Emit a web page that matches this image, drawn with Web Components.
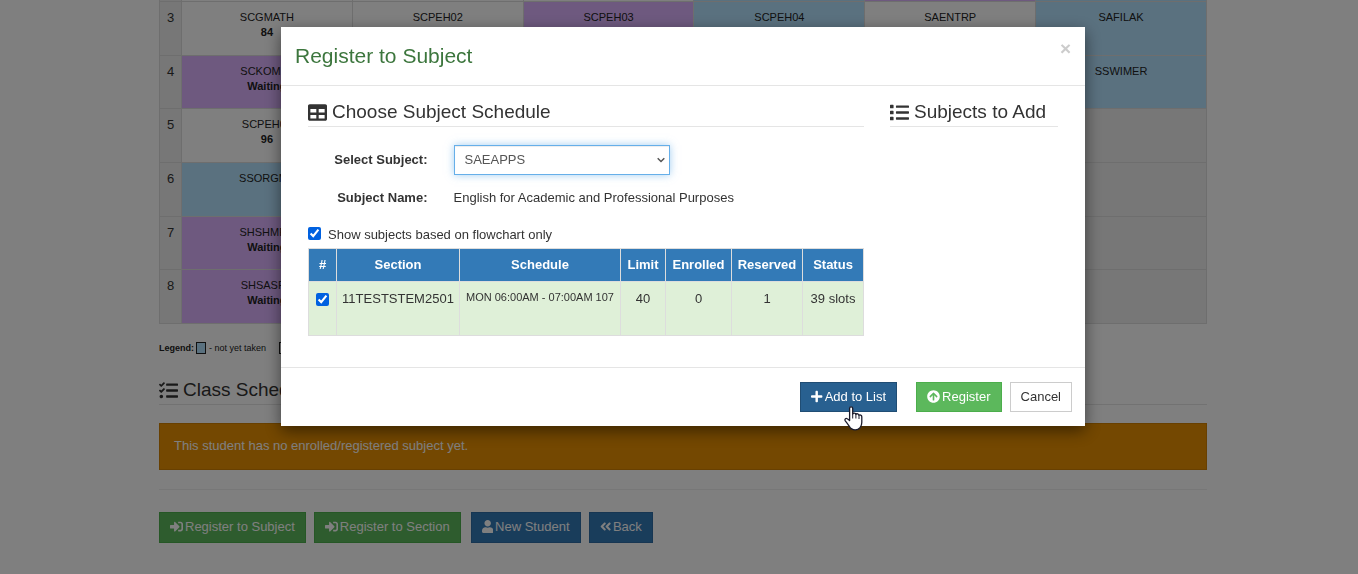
<!DOCTYPE html>
<html lang="en">
<head>
<meta charset="utf-8">
<title>Register to Subject</title>
<style>
  html { background: #fff; }
  body {
    margin: 0;
    padding-left: 8px;
    font: 13px/19px "Liberation Sans", Arial, sans-serif;
    color: #333;
  }
</style>
</head>
<body>
<registration-page></registration-page>
<modal-dialog heading="Register to Subject">
  <choose-schedule></choose-schedule>
  <section-heading slot="side" icon="list">Subjects to Add</section-heading>
  <app-button slot="actions" class="add" kind="primary-active" icon="plus">Add to List</app-button>
  <app-button slot="actions" kind="success" icon="arrow-up">Register</app-button>
  <app-button slot="actions" kind="default">Cancel</app-button>
</modal-dialog>

<script>
const ICONS = {
  table: [512, "M464 32H48C21.49 32 0 53.49 0 80v352c0 26.51 21.49 48 48 48h416c26.51 0 48-21.49 48-48V80c0-26.51-21.49-48-48-48zM224 416H64v-96h160v96zm0-160H64v-96h160v96zm224 160H288v-96h160v96zm0-160H288v-96h160v96z"],
  list: [512, "M80 368H16a16 16 0 0 0-16 16v64a16 16 0 0 0 16 16h64a16 16 0 0 0 16-16v-64a16 16 0 0 0-16-16zm0-320H16A16 16 0 0 0 0 64v64a16 16 0 0 0 16 16h64a16 16 0 0 0 16-16V64a16 16 0 0 0-16-16zm0 160H16a16 16 0 0 0-16 16v64a16 16 0 0 0 16 16h64a16 16 0 0 0 16-16v-64a16 16 0 0 0-16-16zm416 176H176a16 16 0 0 0-16 16v32a16 16 0 0 0 16 16h320a16 16 0 0 0 16-16v-32a16 16 0 0 0-16-16zm0-320H176a16 16 0 0 0-16 16v32a16 16 0 0 0 16 16h320a16 16 0 0 0 16-16V80a16 16 0 0 0-16-16zm0 160H176a16 16 0 0 0-16 16v32a16 16 0 0 0 16 16h320a16 16 0 0 0 16-16v-32a16 16 0 0 0-16-16z"],
  tasks: [512, "M139.61 35.5a12 12 0 0 0-17 0L58.93 98.81l-22.7-22.12a12 12 0 0 0-17 0L3.53 92.41a12 12 0 0 0 0 17l47.59 47.4a12.78 12.78 0 0 0 17.61 0l15.59-15.62L156.52 69a12.09 12.09 0 0 0 .09-17zm0 159.19a12 12 0 0 0-17 0l-63.68 63.72-22.7-22.1a12 12 0 0 0-17 0L3.53 252a12 12 0 0 0 0 17L51 316.5a12.77 12.77 0 0 0 17.6 0l15.7-15.69 72.2-72.22a12 12 0 0 0 .09-16.9zM64 368c-26.49 0-48.59 21.5-48.59 48S37.53 464 64 464a48 48 0 0 0 0-96zm432 16H208a16 16 0 0 0-16 16v32a16 16 0 0 0 16 16h288a16 16 0 0 0 16-16v-32a16 16 0 0 0-16-16zm0-320H208a16 16 0 0 0-16 16v32a16 16 0 0 0 16 16h288a16 16 0 0 0 16-16V80a16 16 0 0 0-16-16zm0 160H208a16 16 0 0 0-16 16v32a16 16 0 0 0 16 16h288a16 16 0 0 0 16-16v-32a16 16 0 0 0-16-16z"],
  "sign-in": [512, "M416 448h-84c-6.6 0-12-5.4-12-12v-40c0-6.6 5.4-12 12-12h84c17.7 0 32-14.3 32-32V160c0-17.7-14.3-32-32-32h-84c-6.6 0-12-5.4-12-12V76c0-6.6 5.4-12 12-12h84c53 0 96 43 96 96v192c0 53-43 96-96 96zm-47-201L201 79c-15-15-41-4.5-41 17v96H24c-13.3 0-24 10.7-24 24v96c0 13.3 10.7 24 24 24h136v96c0 21.5 26 32 41 17l168-168c9.3-9.4 9.3-24.6 0-34z"],
  user: [448, "M224 256c70.7 0 128-57.3 128-128S294.7 0 224 0 96 57.3 96 128s57.3 128 128 128zm89.6 32h-16.7c-22.2 10.2-46.9 16-72.9 16s-50.6-5.8-72.9-16h-16.7C60.2 288 0 348.2 0 422.4V464c0 26.5 21.5 48 48 48h352c26.5 0 48-21.5 48-48v-41.6c0-74.2-60.2-134.4-134.4-134.4z"],
  "angles-left": [448, "M223.7 239l136-136c9.4-9.4 24.6-9.4 33.9 0l22.6 22.6c9.4 9.4 9.4 24.6 0 33.9L319.9 256l96.4 96.4c9.4 9.4 9.4 24.6 0 33.9L393.7 409c-9.4 9.4-24.6 9.4-33.9 0l-136-136c-9.5-9.4-9.5-24.6-.1-34zm-192 34l136 136c9.4 9.4 24.6 9.4 33.9 0l22.6-22.6c9.4-9.4 9.4-24.6 0-33.9L127.9 256l96.4-96.4c9.4-9.4 9.4-24.6 0-33.9L201.7 103c-9.4-9.4-24.6-9.4-33.9 0l-136 136c-9.5 9.4-9.5 24.6-.1 34z"],
  plus: [448, "M416 208H272V64c0-17.67-14.33-32-32-32h-32c-17.67 0-32 14.33-32 32v144H32c-17.67 0-32 14.33-32 32v32c0 17.67 14.33 32 32 32h144v144c0 17.67 14.33 32 32 32h32c17.67 0 32-14.33 32-32V304h144c17.67 0 32-14.33 32-32v-32c0-17.67-14.33-32-32-32z"],
  "arrow-up": [512, "M8 256C8 119 119 8 256 8s248 111 248 248-111 248-248 248S8 393 8 256zm143.6 28.9l72.4-75.5V392c0 13.3 10.7 24 24 24h16c13.3 0 24-10.7 24-24V209.4l72.4 75.5c9.3 9.7 24.8 9.9 34.3.4l10.9-11c9.4-9.4 9.4-24.6 0-33.9L273 107.7c-9.4-9.4-24.6-9.4-33.9 0L106.3 240.4c-9.4 9.4-9.4 24.6 0 33.9l10.9 11c9.6 9.5 25.1 9.3 34.4-.4z"]
};

class Base extends HTMLElement {
  connectedCallback() {
    if (this.shadowRoot) return;
    this.attachShadow({ mode: "open" }).innerHTML = this.render();
  }
}

customElements.define("app-icon", class extends Base {
  render() {
    const [w, d] = ICONS[this.getAttribute("name")];
    return `<style>
      :host { display: block; flex: none; height: 1em; }
      svg { display: block; height: 1em; fill: currentColor; }
    </style>
    <svg viewBox="0 0 ${w} 512" aria-hidden="true"><path d="${d}"/></svg>`;
  }
});

customElements.define("app-button", class extends Base {
  render() {
    const icon = this.getAttribute("icon");
    const kind = this.getAttribute("kind");
    return `<style>
      :host { display: block; }
      button {
        display: flex; align-items: center; gap: 2px;
        height: var(--button-height, 30px); margin: 0; padding: 0 10px 2px;
        border: 1px solid; border-radius: 0;
        font: inherit; color: #fff; white-space: nowrap; cursor: pointer;
      }
      .default { background: #fff; border-color: #ccc; color: #333; }
      .success { background: #5cb85c; border-color: #4cae4c; }
      .primary { background: #337ab7; border-color: #2e6da4; }
      .primary-active { background: #286090; border-color: #204d74; }
    </style>
    <button type="button" class="${kind}">${icon ? `<app-icon name="${icon}"></app-icon>` : ""}<span><slot></slot></span></button>`;
  }
});

customElements.define("section-heading", class extends Base {
  render() {
    return `<style>
      :host { display: block; }
      h3 {
        display: flex; align-items: center; gap: 5px;
        margin: 0; padding-bottom: 3px; border-bottom: 1px solid #e5e5e5;
        font-size: 19px; line-height: 22px; font-weight: 400; white-space: nowrap;
      }
    </style>
    <h3><app-icon name="${this.getAttribute("icon")}"></app-icon><span><slot></slot></span></h3>`;
  }
});

/* Each cell: [state, code, note]; states: n = not yet taken, w = waiting, t = taken, x = unused */
const FLOWCHART = [
  ["", ["t"], ["t"], ["t"], ["n"], ["w"], ["n"]],
  ["3", ["t", "SCGMATH", "84"], ["t", "SCPEH02"], ["w", "SCPEH03"], ["n", "SCPEH04"], ["t", "SAENTRP"], ["n", "SAFILAK"]],
  ["4", ["w", "SCKOMFL", "Waiting"], ["x"], ["x"], ["x"], ["x"], ["n", "SSWIMER"]],
  ["5", ["t", "SCPEH01", "96"], ["x"], ["x"], ["x"], ["x"], ["x"]],
  ["6", ["n", "SSORGMT"], ["x"], ["x"], ["x"], ["x"], ["x"]],
  ["7", ["w", "SHSHMPH", "Waiting"], ["x"], ["x"], ["x"], ["x"], ["x"]],
  ["8", ["w", "SHSASPR", "Waiting"], ["x"], ["x"], ["x"], ["x"], ["x"]]
];

customElements.define("subject-flowchart", class extends Base {
  render() {
    const rows = FLOWCHART.map(([n, ...cells]) => `<tr><th scope="row">${n}</th>${cells.map(([s, code, note]) =>
      `<td class="${s}">${code || ""}${note ? `<b>${note}</b>` : ""}</td>`).join("")}</tr>`).join("");
    return `<style>
      :host { display: block; }
      table { width: 100%; table-layout: fixed; border-collapse: collapse; }
      tr { height: 54px; }
      tr:nth-child(3n) { height: 53px; }
      th, td { padding: 8px 0 0; border: 1px solid #ddd; vertical-align: top; text-align: center; line-height: 15px; }
      th { width: 21px; background: #eee; font-weight: 400; }
      td { font-size: 11px; color: #222; }
      b { display: block; }
      .n { background: #b5e2ff; }
      .w { background: #dcb3ff; }
      .x { background: #eee; }
    </style>
    <table><tbody>${rows}</tbody></table>`;
  }
});

customElements.define("flowchart-legend", class extends Base {
  render() {
    return `<style>
      :host { display: flex; align-items: center; font-size: 9px; line-height: 12px; color: #222; }
      i { box-sizing: border-box; width: 10px; height: 12px; margin: 0 3px 0 2px; border: 1px solid #222; }
      i.n { background: #b5e2ff; }
      span { margin-right: 11px; }
    </style>
    <b>Legend:</b><i class="n"></i><span>- not yet taken</span><i></i><span>- taken</span>`;
  }
});

customElements.define("registration-page", class extends Base {
  render() {
    return `<style>
      :host { display: block; max-width: 1048px; margin: 0 auto; overflow: hidden; }
      subject-flowchart { margin-top: -53px; }
      flowchart-legend { margin-top: 18px; }
      section-heading { margin: 25px 0 18px; }
      .alert { padding: 12px 14px 14px; border: 1px solid #d08002; background: #e99002; color: #fff; }
      hr { margin: 19px 0 22px; border: 0; border-top: 1px solid #eee; }
      nav { display: flex; flex-wrap: wrap; gap: 8px; --button-height: 31px; }
      .group { display: flex; gap: 8px; margin-left: 2px; }
    </style>
    <subject-flowchart></subject-flowchart>
    <flowchart-legend></flowchart-legend>
    <section-heading icon="tasks">Class Schedule</section-heading>
    <div class="alert" role="alert">This student has no enrolled/registered subject yet.</div>
    <hr>
    <nav>
      <app-button kind="success" icon="sign-in">Register to Subject</app-button>
      <app-button kind="success" icon="sign-in">Register to Section</app-button>
      <div class="group">
        <app-button kind="primary" icon="user">New Student</app-button>
        <app-button kind="primary" icon="angles-left">Back</app-button>
      </div>
    </nav>`;
  }
});

customElements.define("schedule-table", class extends Base {
  render() {
    return `<style>
      :host { display: block; }
      table { width: 100%; table-layout: fixed; border-collapse: collapse; background: #dff0d8; }
      th, td { padding: 0; border: 1px solid #ddd; text-align: center; white-space: nowrap; }
      th { height: 30px; padding-bottom: 2px; background: #337ab7; color: #fff; }
      td { height: 46px; padding-top: 7px; vertical-align: top; }
      td.time { font-size: 11px; line-height: 17px; }
      input { display: block; width: 13px; height: 13px; margin: 4px auto 0; accent-color: #0061e0; }
      .c1 { width: 28px; } .c2 { width: 123px; } .c4 { width: 45px; }
      .c5 { width: 66px; } .c6 { width: 71px; } .c7 { width: 61px; }
    </style>
    <table>
      <colgroup><col class="c1"><col class="c2"><col><col class="c4"><col class="c5"><col class="c6"><col class="c7"></colgroup>
      <thead><tr><th>#</th><th>Section</th><th>Schedule</th><th>Limit</th><th>Enrolled</th><th>Reserved</th><th>Status</th></tr></thead>
      <tbody><tr>
        <td><input type="checkbox" checked aria-label="11TESTSTEM2501"></td>
        <td>11TESTSTEM2501</td><td class="time">MON 06:00AM - 07:00AM 107</td>
        <td>40</td><td>0</td><td>1</td><td>39 slots</td>
      </tr></tbody>
    </table>`;
  }
});

customElements.define("choose-schedule", class extends Base {
  render() {
    return `<style>
      :host { display: block; }
      .form { display: grid; grid-template-columns: repeat(12, 1fr); column-gap: 26px; row-gap: 8px; align-items: center; margin: 18px 0 11px; }
      .label { grid-column: 1 / 4; line-height: 30px; text-align: right; font-weight: 700; }
      .field { grid-column: 4 / 9; display: grid; align-items: center; }
      .value { grid-column: 4 / 13; line-height: 30px; }
      select, .field svg { grid-area: 1 / 1; }
      select {
        appearance: none; width: 100%; height: 30px; margin: 0; padding: 0 11px 2px 10px;
        border: 1px solid #66afe9; border-radius: 0; background: #fff; color: #555; font: inherit;
        box-shadow: inset 0 1px 1px rgba(0,0,0,.075), 0 0 8px rgba(102,175,233,.6);
      }
      .field svg { justify-self: end; width: 8px; height: 6px; margin-right: 5px; fill: none; stroke: #555; stroke-width: 1.5; pointer-events: none; }
      .check { display: flex; align-items: center; gap: 7px; line-height: 20px; padding-top: 1px; margin-bottom: 3px; }
      .check input { width: 13px; height: 13px; margin: 0 0 3px; accent-color: #0061e0; }
    </style>
    <section-heading icon="table">Choose Subject Schedule</section-heading>
    <div class="form">
      <label class="label" for="subject">Select Subject:</label>
      <div class="field">
        <select id="subject"><option>SAEAPPS</option></select>
        <svg viewBox="0 0 8 6" aria-hidden="true"><path d="M.7 1.2 4 4.5 7.3 1.2"/></svg>
      </div>
      <span class="label">Subject Name:</span>
      <span class="value">English for Academic and Professional Purposes</span>
    </div>
    <label class="check"><input type="checkbox" checked>Show subjects based on flowchart only</label>
    <schedule-table></schedule-table>`;
  }
});

customElements.define("hand-pointer", class extends Base {
  render() {
    return `<style>
      :host { display: block; pointer-events: none; }
      svg { display: block; width: 19px; height: 25px; }
    </style>
    <svg viewBox="0 0 19 25" aria-hidden="true">
      <path fill="#fff" stroke="#1b1b2b" stroke-width="1.3" stroke-linejoin="round" d="M5.6 14.6V2.6C5.6 1.3 6.3.8 7.1.8S8.7 1.3 8.7 2.6V8C9 6.9 11.6 6.8 11.9 8.4 12.6 7.3 14.8 7.6 15 9.3 15.8 8.6 17.8 9 17.8 10.8V16.2C17.8 20.4 15.4 23.9 11.2 23.9 8.2 23.9 6.6 22.8 5.3 20.4 4 18.2 3.1 17 1.3 14.8.3 13.4 1.7 11.9 3.2 12.7 4.1 13.2 4.9 13.9 5.6 14.6Z"/>
      <path fill="none" stroke="#1b1b2b" d="M8.7 8V12.5M11.9 8.4V12.5M15 9.3V13"/>
    </svg>`;
  }
});

customElements.define("modal-dialog", class extends Base {
  render() {
    return `<style>
      :host { position: fixed; inset: 0; padding: 27px 0 0 8px; background: rgba(0,0,0,.5); overflow: hidden; }
      .dialog { max-width: 804px; margin: 0 auto; background: #fff; box-shadow: 0 5px 15px rgba(0,0,0,.5); }
      header { display: flex; justify-content: space-between; align-items: flex-start; padding: 13px 14px; border-bottom: 1px solid #e5e5e5; }
      h4 { margin: 0; font-size: 21px; line-height: 32px; font-weight: 400; color: #3c763d; }
      .close { margin: 0; padding: 0; border: 0; background: none; font: 700 19px/18px "Liberation Sans", Arial, sans-serif; color: #ccc; cursor: pointer; }
      .body { display: grid; grid-template-columns: 556fr 168fr; gap: 26px; padding: 15px 27px 31px; }
      .body > div { min-width: 0; }
      footer { position: relative; display: flex; justify-content: flex-end; gap: 8px; padding: 14px 13px; border-top: 1px solid #e5e5e5; }
      ::slotted(.add) { margin-right: 11px; }
      hand-pointer { position: absolute; left: 563px; top: 38px; }
    </style>
    <div class="dialog" role="dialog" aria-modal="true" aria-labelledby="title">
      <header><h4 id="title">${this.getAttribute("heading")}</h4><button class="close" type="button" aria-label="Close">×</button></header>
      <div class="body"><div><slot></slot></div><div><slot name="side"></slot></div></div>
      <footer><slot name="actions"></slot><hand-pointer></hand-pointer></footer>
    </div>`;
  }
});
</script>
</body>
</html>
